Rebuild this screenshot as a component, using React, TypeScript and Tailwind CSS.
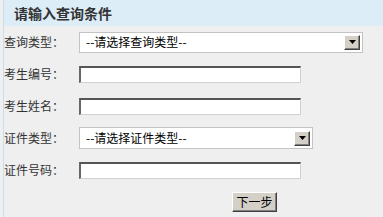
import React from 'react';

const font = { fontFamily: '"Noto Sans CJK SC", "Noto Sans", sans-serif' };

const DropButton: React.FC = () => (
  <div className="flex h-[15px] w-[16px] items-center justify-center border border-t-white border-l-white border-r-[#404040] border-b-[#404040] bg-[#d4d0c8] shadow-[inset_-1px_-1px_0_#808080]">
    <svg width="7" height="4" viewBox="0 0 7 4">
      <polygon points="0,0 7,0 3.5,4" fill="#000" />
    </svg>
  </div>
);

const FakeSelect: React.FC<{ text: string; width: string; height: string }> = ({ text, width, height }) => (
  <div className={`flex items-center justify-between border border-[#c3c3c3] bg-white pl-[6px] pr-[2px] ${width} ${height}`}>
    <span className="text-[12px] leading-none text-black">{text}</span>
    <DropButton />
  </div>
);

const TextBox: React.FC = () => (
  <div className="h-[17px] w-[222px] border-2 border-t-[#555] border-l-[#666] border-r-[#d0d0d0] border-b-[#d0d0d0] border-r-[1px] border-b-[1px] bg-white" />
);

const Row: React.FC<{ label: string; children: React.ReactNode }> = ({ label, children }) => (
  <div className="flex h-[32px] items-center">
    <div className="w-[75px] text-[12px] leading-none text-[#333]">{label}</div>
    {children}
  </div>
);

export default function App() {
  return (
    <div className="h-[217px] w-[383px] overflow-hidden bg-[#efefef] pl-[3px]" style={font}>
      <div className="h-full border-l border-[#c9dfe9]">
        <div className="flex h-[26px] items-center bg-[#dcedf8] pl-[10px]">
          <span className="text-[14px] font-bold leading-none text-[#333]">请输入查询条件</span>
        </div>
        <Row label="查询类型：">
          <FakeSelect text="--请选择查询类型--" width="w-[284px]" height="h-[21px]" />
        </Row>
        <Row label="考生编号：">
          <TextBox />
        </Row>
        <Row label="考生姓名：">
          <TextBox />
        </Row>
        <Row label="证件类型：">
          <FakeSelect text="--请选择证件类型--" width="w-[234px]" height="h-[22px]" />
        </Row>
        <Row label="证件号码：">
          <TextBox />
        </Row>
        <div className="flex h-[32px] items-center pl-[228px]">
          <button className="flex h-[20px] w-[45px] items-center justify-center border border-t-white border-l-white border-r-[#404040] border-b-[#404040] bg-[#d4d0c8] text-[12px] leading-none text-black shadow-[inset_-1px_-1px_0_#808080]">
            下一步
          </button>
        </div>
      </div>
    </div>
  );
}
